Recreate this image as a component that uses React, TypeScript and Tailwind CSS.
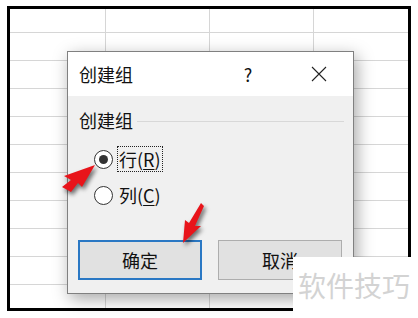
import React from 'react';

const cjk = { fontFamily: '"Noto Sans CJK SC", "Noto Sans", sans-serif' };

const rowHeights = ['h-[24px]', 'h-[28px]', 'h-[28px]', 'h-[28px]', 'h-[28px]', 'h-[28px]', 'h-[28px]', 'h-[28px]', 'h-[28px]', 'h-[28px]', 'flex-1'];

function SheetGrid() {
  return (
    <div className="flex flex-col w-full h-full">
      {rowHeights.map((h, i) => (
        <div key={i} className={`flex ${h} ${i < rowHeights.length - 1 ? 'border-b border-[#d6d6d6]' : ''}`}>
          <div className="w-[96px] border-r border-[#d6d6d6]" />
          <div className="w-[104px] border-r border-[#d6d6d6]" />
          <div className="w-[104px] border-r border-[#d6d6d6]" />
          <div className="flex-1" />
        </div>
      ))}
    </div>
  );
}

function Radio({ checked }: { checked?: boolean }) {
  return (
    <span className="w-[19px] h-[19px] rounded-full border border-[#333] bg-white flex items-center justify-center shrink-0">
      {checked && <span className="w-[9px] h-[9px] rounded-full bg-[#333]" />}
    </span>
  );
}

function Dialog() {
  return (
    <div
      className="absolute left-[67px] top-[51px] w-[287px] h-[243px] border border-[#808080] bg-[#f0f0f0] flex flex-col shadow-[3px_5px_16px_rgba(0,0,0,0.35)]"
      style={cjk}
    >
      {/* title bar */}
      <div className="h-[44px] bg-white flex items-center pl-[11px] text-[18px] text-[#111] shrink-0">
        <span>创建组</span>
        <div className="flex-1" />
        <span className="w-[46px] text-center">?</span>
        <div className="w-[25px]" />
        <span className="w-[46px] flex items-center justify-center">
          <svg width="16" height="16" viewBox="0 0 16 16" fill="none" stroke="#222" strokeWidth="1.1">
            <path d="M1 1 L15 15 M15 1 L1 15" />
          </svg>
        </span>
        <div className="w-[11px]" />
      </div>

      {/* body */}
      <div className="flex-1 flex flex-col pt-[12px] text-[18px] text-[#111]">
        <div className="flex items-center h-[24px] pl-[11px] pr-[9px]">
          <span>创建组</span>
          <div className="flex-1 ml-[4px] h-px bg-[#d8d8d8] mt-[2px]" />
        </div>

        <div className="flex flex-col gap-[10px] mt-[14px] pl-[26px]">
          <div className="flex items-center h-[26px]">
            <Radio checked />
            <span className="ml-[4px] h-[26px] px-[1px] flex items-center border border-dotted border-[#222] leading-none">
              行(<span className="underline underline-offset-2">R</span>)
            </span>
          </div>
          <div className="flex items-center h-[26px]">
            <Radio />
            <span className="ml-[5px] px-[1px] flex items-center leading-none">
              列(<span className="underline underline-offset-2">C</span>)
            </span>
          </div>
        </div>

        <div className="flex gap-[16px] mt-[32px] pl-[10px]">
          <button className="w-[124px] h-[40px] bg-[#e1e1e1] border-2 border-[#2a78c4] flex items-center justify-center text-[18px]">
            确定
          </button>
          <button className="w-[124px] h-[40px] bg-[#e1e1e1] border border-[#adadad] flex items-center justify-center text-[18px]">
            取消
          </button>
        </div>
      </div>
    </div>
  );
}

function Arrows() {
  return (
    <svg className="absolute left-0 top-0 drop-shadow-[2px_3px_2px_rgba(0,0,0,0.55)]" width="418" height="318" viewBox="0 0 418 318">
      <polygon points="95,165 64,176 71,180 62,187 71,192 78,183 82,187" fill="#e8141a" />
      <polygon points="183,243 185,220 189,223 201,203 204,206 195,226 201,226" fill="#e8141a" />
    </svg>
  );
}

export default function App() {
  return (
    <div className="relative w-[418px] h-[318px] bg-white overflow-hidden">
      <div className="ml-[7px] mt-[6px] w-[404px] h-[305px] border-[3px] border-black">
        <SheetGrid />
      </div>

      <Dialog />
      <Arrows />

      {/* watermark */}
      <div className="absolute left-[293px] top-[257px] right-0 bottom-0 bg-white pl-[5px] pt-[14px]" style={cjk}>
        <span className="text-[28px] leading-none text-[#d3d3d3] whitespace-nowrap">软件技巧</span>
      </div>
    </div>
  );
}
